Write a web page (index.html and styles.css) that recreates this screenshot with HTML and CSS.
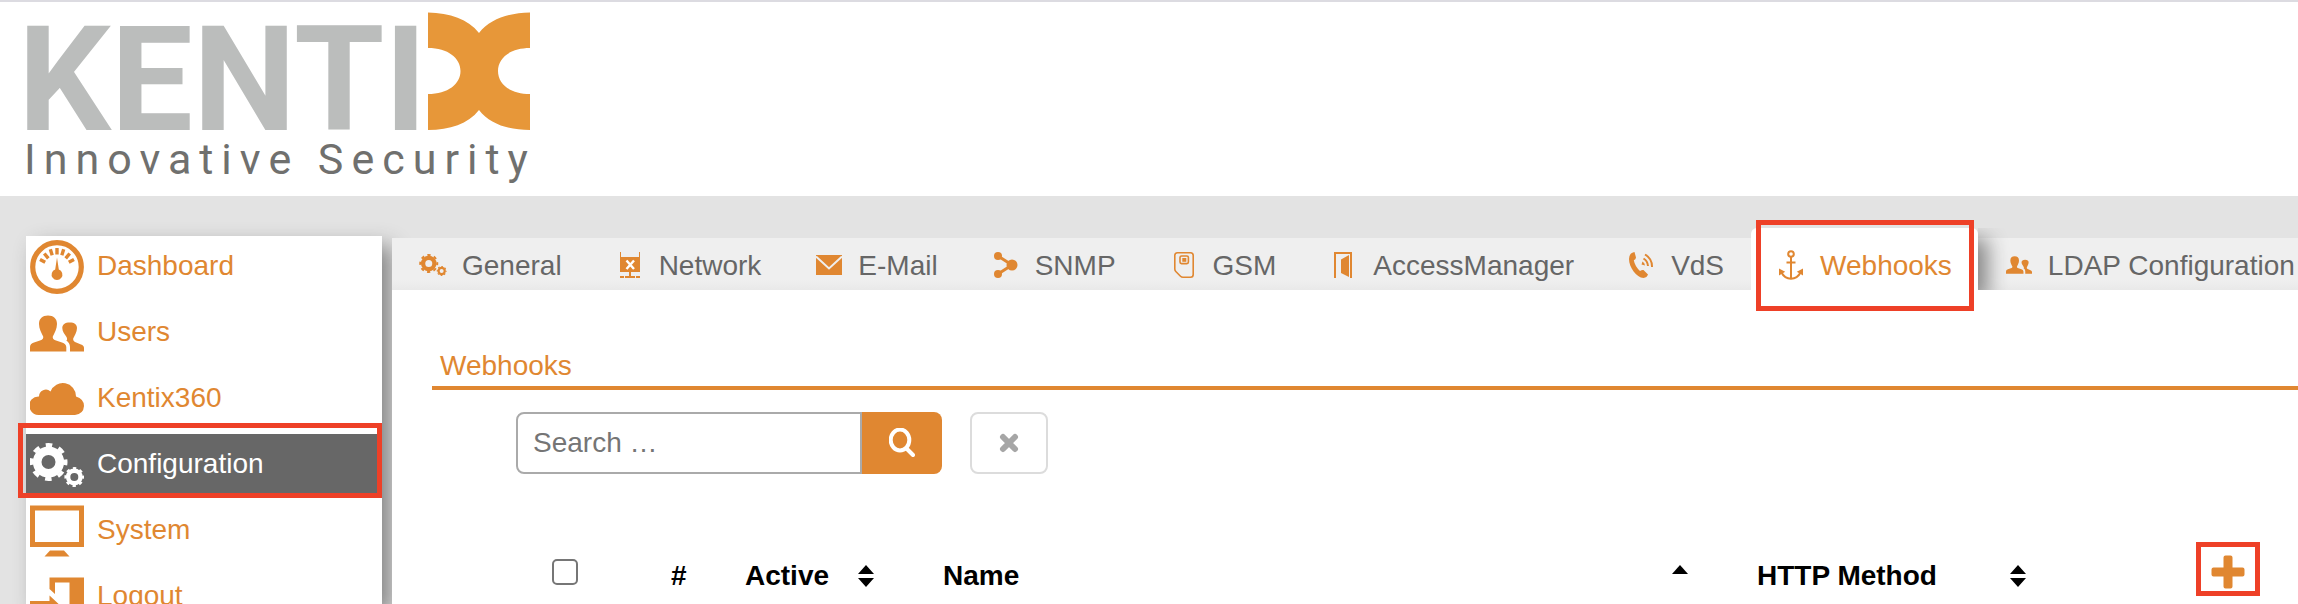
FILE: index.html
```html
<!DOCTYPE html>
<html lang="en">
<head>
<meta charset="utf-8">
<meta name="viewport" content="width=device-width, initial-scale=1">
<title>Kentix – Webhooks</title>
<link rel="stylesheet" href="styles.css">
</head>
<body>
<svg class="sprite" aria-hidden="true">
  <symbol id="gears" viewBox="0 9 54 44">
    <g fill="none" stroke="currentColor">
      <circle cx="18.5" cy="28" r="11.3" stroke-width="8.6"/>
      <circle cx="18.5" cy="28" r="17" stroke-width="4" stroke-dasharray="6.6 6.75" stroke-dashoffset="3.3"/>
      <circle cx="44.3" cy="43" r="6.2" stroke-width="4.4"/>
      <circle cx="44.3" cy="43" r="8.8" stroke-width="2.2" stroke-dasharray="3.4 3.51" stroke-dashoffset="1.7"/>
    </g>
  </symbol>
  <symbol id="users" viewBox="0 13 54 37">
    <path fill="currentColor" d="M0 49.500V45Q0 41.500 4 40.500L10 38.500C13 37.500 13.500 36 13.200 34.500C11.500 31 9 27 9 22C9 16.500 12.500 13.500 18 13.500S27 16.500 27 22C27 27 24.500 31 22.800 34.500C22.500 36 23 37.500 26 38.500L32 40.500Q36 41.500 36.300 45V49.500Z"/>
    <path fill="currentColor" d="M40 49.500V45C40 42 38.500 40 36.300 38.500C37.500 38 37.200 36.500 36.500 35C34.500 32 32.300 29.500 32.300 26C32.300 22.500 35 20.500 39.700 20.500S47 22.500 47 26C47 30.500 44.500 33.500 43.200 36.500C43 38 43.500 39.200 45 40L51 42.500Q54 43.500 54 46V49.500Z"/>
  </symbol>
</svg>

<header class="header">
  <a class="logo" href="#" aria-label="Kentix Innovative Security">
    <svg width="540" height="194" viewBox="0 2 540 194">
      <text class="logo-name" x="18" y="130">KENTI</text>
      <path fill="#e79739" d="M428 12.500C450 13 468 19 479 33C490 19 508 13 530 12.500V48C510 48 498 58 498 71S510 94 530 94V130C508 130 490 124 479 110C468 124 450 130 428 130V94C448 94 460.500 84 460.500 71S448 48 428 48Z"/>
      <text class="logo-claim" x="24" y="174">Innovative Security</text>
    </svg>
  </a>
</header>

<div class="layout">
  <nav class="sidebar" aria-label="Main">
    <a class="side-link" href="#">
      <svg class="side-icon" viewBox="0 0 54 60">
        <circle cx="27" cy="31" r="24.300" fill="none" stroke="currentColor" stroke-width="5.200"/>
        <path stroke="currentColor" stroke-width="3.400" d="M27 12v6.500M20.300 13.300l1.900 5.900M33.700 13.300l-1.900 5.900M14.300 17.500l4 4.800M39.700 17.500l-4 4.800M10 23.500l5.200 2.800M44 23.500l-5.200 2.800"/>
        <path fill="currentColor" d="M27 21.500L28.800 33.500A5.400 5.400 0 1 1 25.200 33.500Z"/>
      </svg>
      Dashboard
    </a>
    <a class="side-link" href="#">
      <svg class="side-icon" viewBox="0 0 54 60"><use href="#users" x="0" y="13" width="54" height="37"/></svg>
      Users
    </a>
    <a class="side-link" href="#">
      <svg class="side-icon" viewBox="0 0 54 60"><path fill="currentColor" d="M9.500 47A9.500 9.500 0 0 1 1.500 31.500Q4.500 28.300 9 28.500A6.800 6.800 0 0 1 20.500 23.500A13.200 13.200 0 0 1 46 28.500Q54 31 54 38Q53.500 46 45 47Z"/></svg>
      Kentix360
    </a>
    <a class="side-link is-active marked" href="#" aria-current="page">
      <svg class="side-icon" viewBox="0 0 54 60"><use href="#gears" x="0" y="9" width="54" height="44"/></svg>
      Configuration
    </a>
    <a class="side-link" href="#">
      <svg class="side-icon" viewBox="0 0 54 60"><path fill="none" stroke="currentColor" stroke-width="5" d="M2.500 8H51.500V44.500H2.500Z"/><path fill="currentColor" d="M20 50.500H34L39.500 56.500H14.500Z"/></svg>
      System
    </a>
    <a class="side-link" href="#">
      <svg class="side-icon" viewBox="0 0 54 60"><path fill="currentColor" d="M19.500 11.500H54V57H39.500V16.500H25V28L19.500 23ZM0 35H19.500V29.500L34 43L19.500 56V49H0Z"/></svg>
      Logout
    </a>
  </nav>

  <main class="content">
    <nav class="tabs" aria-label="Configuration">
      <a class="tab" href="#"><svg class="tab-icon" viewBox="0 0 28 30"><use href="#gears" x="0" y="3" width="28" height="22"/></svg>General</a>
      <a class="tab" href="#">
        <svg class="tab-icon" viewBox="0 0 28 30">
          <path fill="currentColor" d="M4 1h1v5h18V1h1v20H15v4h4v2H9v-2h4v-4H4ZM4 25h4v2H4ZM20 25h4v2h-4Z"/>
          <path stroke="#fff" stroke-width="2.400" d="M10.500 9.500l7.500 8.500M18 9.500L10.500 18"/>
        </svg>Network</a>
      <a class="tab" href="#">
        <svg class="tab-icon" viewBox="0 0 28 30">
          <path fill="currentColor" d="M1 4H27V24H1Z"/><path fill="none" stroke="#efefef" stroke-width="2" d="M1 5.500L14 17.500L27 5.500"/>
        </svg>E-Mail</a>
      <a class="tab" href="#">
        <svg class="tab-icon" viewBox="0 0 28 30">
          <path fill="none" stroke="currentColor" stroke-width="3" d="M6 5L20 14L6 23"/><g fill="currentColor"><circle cx="6" cy="5" r="4"/><circle cx="20" cy="14" r="5.500"/><circle cx="6" cy="23" r="4"/></g>
        </svg>SNMP</a>
      <a class="tab" href="#">
        <svg class="tab-icon" viewBox="0 0 28 30">
          <path fill="none" stroke="currentColor" stroke-width="1.600" d="M7.500 1.800H20.500Q23.200 1.800 23.200 4.500V23.500Q23.200 26.200 20.500 26.200H13Q11.500 26.200 10.500 25.200L5.800 20.500Q4.800 19.500 4.800 18V4.500Q4.800 1.800 7.500 1.800Z"/>
          <rect x="10" y="5" width="8.400" height="7.600" rx="1.500" fill="none" stroke="currentColor" stroke-width="1.600"/><path fill="currentColor" d="M12.300 7h4v3.800h-4Z"/>
        </svg>GSM</a>
      <a class="tab" href="#">
        <svg class="tab-icon" viewBox="0 0 28 30">
          <path fill="currentColor" d="M4 1H22V27H20V3H6V27H4ZM11 8.500L19 4V26L11 22Z"/>
        </svg>AccessManager</a>
      <a class="tab" href="#">
        <svg class="tab-icon" viewBox="0 0 28 30">
          <path fill="currentColor" d="M3 2.500Q5 1 6.500 1L8 6.500Q7.800 8.500 5.800 9.300Q7 15.500 12 20Q14 18.500 15.500 19L20 23.500Q19 26.500 15.500 27C8.500 26.500 1 16.500 1 8Q1 4.500 3 2.500Z"/>
          <path fill="none" stroke="currentColor" stroke-width="2" d="M17 3.500A14 14 0 0 1 24 16M15.500 7.500A9.500 9.500 0 0 1 20 15"/>
          <path fill="currentColor" d="M14.500 10.500A5 5 0 0 1 17 14.500L13.500 13.500Z"/>
        </svg>VdS</a>
      <a class="tab is-active marked" href="#" aria-current="page">
        <svg class="tab-icon" viewBox="0 0 28 30">
          <g fill="none" stroke="currentColor" stroke-width="2"><circle cx="14" cy="3" r="2.800"/><path d="M14 6V28M9.500 11.500H18.500M4.500 21.500Q7.500 27.500 14 27.800Q20.500 27.500 23.500 21.500"/></g>
          <path fill="currentColor" d="M2 17.500L8.200 20.800L2 24.500ZM26 17.500L19.800 20.800L26 24.500Z"/>
        </svg>Webhooks</a>
      <a class="tab" href="#"><svg class="tab-icon" viewBox="0 0 28 30"><use href="#users" x="1" y="5" width="26" height="18"/></svg>LDAP Configuration</a>
    </nav>

    <section class="panel">
      <h1 class="title">Webhooks</h1>

      <form class="search">
        <input class="search-input" type="text" placeholder="Search …" aria-label="Search">
        <button class="search-submit" type="button" aria-label="Search">
          <svg width="26" height="30" viewBox="0 0 26 30"><ellipse cx="11" cy="12" rx="9.300" ry="10.500" fill="none" stroke="currentColor" stroke-width="4"/><path stroke="currentColor" stroke-width="4" stroke-linecap="round" d="M17.500 20.500L24 27"/></svg>
        </button>
        <button class="search-clear" type="button" aria-label="Clear search">
          <svg width="20" height="20" viewBox="0 0 20 20"><path stroke="currentColor" stroke-width="6" stroke-linecap="round" d="M4 4L16 16M16 4L4 16"/></svg>
        </button>
      </form>

      <table class="hooks">
        <thead>
          <tr>
            <th class="col-check"><input class="check" type="checkbox" aria-label="Select all"></th>
            <th class="col-num">#</th>
            <th class="col-active"><button class="sort" type="button">Active <svg width="16" height="24" viewBox="0 0 16 24"><path d="M8 1L16 10H0ZM0 14H16L8 23Z"/></svg></button></th>
            <th><button class="sort" type="button">Name <svg width="16" height="24" viewBox="0 0 16 24"><path d="M8 1L16 10H0Z"/></svg></button></th>
            <th class="col-method"><button class="sort" type="button">HTTP Method <svg width="16" height="24" viewBox="0 0 16 24"><path d="M8 1L16 10H0ZM0 14H16L8 23Z"/></svg></button></th>
            <th class="col-add"><button class="add" type="button" aria-label="Add webhook"><svg width="34" height="34" viewBox="0 0 34 34"><path fill="currentColor" d="M14.500 0.500H19.500Q21.500 0.500 21.500 2.500V12.500H31.500Q33.500 12.500 33.500 14.500V19.500Q33.500 21.500 31.500 21.500H21.500V31.500Q21.500 33.500 19.500 33.500H14.500Q12.500 33.500 12.500 31.500V21.500H2.500Q0.500 21.500 0.500 19.500V14.500Q0.500 12.500 2.500 12.500H12.500V2.500Q12.500 0.500 14.500 0.500Z"/></svg></button></th>
          </tr>
        </thead>
      </table>
    </section>
  </main>
</div>
</body>
</html>
```
FILE: styles.css
```css
* {
  box-sizing: border-box;
}

body {
  display: flex;
  flex-direction: column;
  height: 100vh;
  margin: 0;
  background: #e3e3e3;
  color: #666;
  font: 28px/40px "Liberation Sans", Arial, sans-serif;
}

a {
  color: inherit;
  text-decoration: none;
}

svg {
  display: block;
  flex: none;
}

.sprite {
  position: absolute;
  width: 0;
  height: 0;
}

.header {
  flex: none;
  border-top: 2px solid #dcdbe1;
  background: #fff;
}

.logo {
  display: inline-block;
  vertical-align: top;
}

.logo-name {
  fill: #bbbdbc;
  font: bold 146px Roboto, sans-serif;
}

.logo-claim {
  fill: #70706e;
  font: 43px Roboto, sans-serif;
  letter-spacing: 8px;
}

.layout {
  display: flex;
  flex: 1;
  gap: 10px;
  min-height: 0;
  padding: 40px 0 0 26px;
  overflow: hidden;
}

.sidebar {
  display: flex;
  flex: none;
  flex-direction: column;
  gap: 6px;
  width: 356px;
  background: #fff;
  box-shadow: 10px 10px 20px #888;
  color: #e08731;
}

.side-link {
  display: flex;
  flex: none;
  align-items: center;
  gap: 13px;
  height: 60px;
  padding-left: 4px;
}

.side-link.is-active {
  background: #676767;
  color: #fff;
}

.side-icon {
  width: 54px;
  height: 60px;
}

.marked {
  position: relative;
}

.marked::after {
  position: absolute;
  inset: -8px 4px -21px 5px;
  border: 5px solid #ee4027;
  content: "";
}

.side-link.marked::after {
  inset: -11px 0 -4px -8px;
}

.content {
  display: flex;
  flex: 1;
  flex-direction: column;
  min-width: 0;
  padding-top: 2px;
}

.tabs {
  position: relative;
  display: flex;
  flex: none;
  z-index: 1;
  height: 52px;
  background: linear-gradient(#efefef 80%, #e9e9e9);
  white-space: nowrap;
}

.tab {
  display: flex;
  flex: none;
  align-items: center;
  gap: 15px;
  height: 52px;
  padding: 4px 27px 0;
}

.tab.is-active {
  height: 62px;
  margin-top: -10px;
  padding: 14px 26px 0;
  border-radius: 6px 6px 0 0;
  background: #fff;
  color: #e08731;
}

/* Shadow falls on the bar to the right only and stops at the panel. */
.tab.is-active::before {
  position: absolute;
  inset: 0;
  z-index: -1;
  border-radius: 6px 6px 0 0;
  box-shadow: 10px 10px 20px #888;
  clip-path: inset(0 -40px 0 100%);
  content: "";
}

.tab-icon {
  width: 28px;
  height: 30px;
  overflow: visible;
  color: #e08731;
}

.panel {
  flex: 1;
  padding: 60px 0 0 40px;
  background: #fff;
}

.title {
  margin: 0;
  padding: 0 0 4px 8px;
  border-bottom: 4px solid #e08731;
  color: #e08731;
  font-size: 28px;
  font-weight: normal;
  line-height: 32px;
}

.search {
  display: flex;
  height: 62px;
  margin: 22px 0 68px 84px;
}

.search-input {
  width: 346px;
  padding: 0 15px;
  border: 2px solid #aaa;
  border-radius: 8px 0 0 8px;
  background: #fff;
  font: inherit;
}

.search-input::placeholder {
  color: #757575;
  opacity: 1;
}

button {
  display: flex;
  align-items: center;
  justify-content: center;
  padding: 0;
  border: 0;
  background: none;
  color: inherit;
  font: inherit;
}

.search-submit {
  width: 80px;
  border-radius: 0 8px 8px 0;
  background: #e08731;
  color: #fff;
}

.search-clear {
  width: 78px;
  margin-left: 28px;
  border: 2px solid #dcdcdc;
  border-radius: 8px;
  color: #a6a6a6;
}

.hooks {
  width: calc(100% - 84px);
  margin-left: 84px;
  border-collapse: collapse;
  table-layout: fixed;
  color: #000;
}

.hooks th {
  padding: 0 49px 0 20px;
  text-align: left;
  vertical-align: bottom;
}

.hooks .col-check {
  width: 135px;
  padding: 0 0 0 36px;
  vertical-align: middle;
}

.hooks .col-num {
  width: 74px;
  padding-right: 0;
}

.col-active {
  width: 198px;
}

.col-method {
  width: 338px;
}

.hooks .col-add {
  width: 223px;
  padding: 0 38px 0 0;
}

.sort {
  justify-content: space-between;
  width: 100%;
}

.check {
  display: block;
  width: 26px;
  height: 26px;
  margin: 6px 0 0;
  appearance: none;
  border: 2px solid #767676;
  border-radius: 5px;
  background: #fff;
}

.add {
  width: 64px;
  height: 54px;
  margin-left: auto;
  padding-top: 6px;
  border: 5px solid #ee4027;
  color: #e08731;
}
```
